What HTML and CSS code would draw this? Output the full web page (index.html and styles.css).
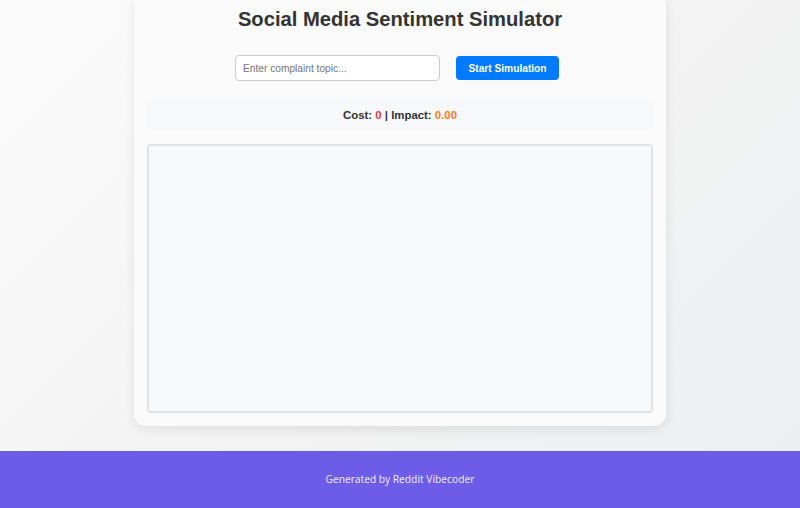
FILE: index.html
```html
<!DOCTYPE html>
<html lang="en">
<head>
<meta charset="utf-8">
<title>Social Media Sentiment Simulator</title>
<link rel="stylesheet" href="styles.css">
</head>
<body>
<main class="page">
  <section class="card">
    <h1 class="title">Social Media Sentiment Simulator</h1>
    <div class="controls">
      <input class="topic" type="text" placeholder="Enter complaint topic...">
      <button class="start">Start Simulation</button>
    </div>
    <div class="stats">Cost: <span class="cost">0</span> | Impact: <span class="impact">0.00</span></div>
    <div class="canvas"></div>
  </section>
</main>
<footer class="footer">Generated by Reddit Vibecoder</footer>
</body>
</html>
```

FILE: styles.css
```css
html, body {
  margin: 0;
  padding: 0;
}
body {
  font-family: "Liberation Sans", Arial, sans-serif;
  color: #333;
  background: linear-gradient(135deg, #fcfbfb 0%, #f3f3f3 50%, #eceef0 100%);
  height: 508px;
  overflow: hidden;
  display: flex;
  flex-direction: column;
}
.page {
  flex: 1;
  display: flex;
  justify-content: center;
  align-items: flex-start;
}
.card {
  width: 508px;
  margin-top: -8px;
  padding: 13px 12px 13px;
  background: #fafafa;
  border-radius: 12px;
  box-shadow: 0 4px 12px rgba(0, 0, 0, 0.08);
}
.title {
  margin: 0;
  font-size: 20.2px;
  line-height: 28px;
  font-weight: bold;
  text-align: center;
  color: #333;
}
.controls {
  margin-top: 22px;
  display: flex;
  justify-content: center;
  align-items: center;
  gap: 16px;
  padding-right: 6px;
}
.topic {
  box-sizing: border-box;
  width: 205px;
  height: 26px;
  padding: 0 7px;
  border: 1px solid #ccc;
  border-radius: 4px;
  background: #fff;
  font-family: "Liberation Sans", Arial, sans-serif;
  font-size: 10.2px;
  color: #333;
  outline: none;
}
.topic::placeholder {
  color: #757575;
}
.start {
  box-sizing: border-box;
  width: 103px;
  height: 24px;
  border: none;
  border-radius: 4px;
  background: #007bff;
  color: #fff;
  font-family: "Liberation Sans", Arial, sans-serif;
  font-size: 10.2px;
  font-weight: bold;
  cursor: pointer;
}
.stats {
  margin-top: 19px;
  height: 30px;
  line-height: 30px;
  background: #f7f8fa;
  border-radius: 6px;
  text-align: center;
  font-size: 11.4px;
  font-weight: bold;
  color: #333;
}
.cost {
  color: #e63946;
}
.impact {
  color: #fd7e14;
}
.canvas {
  margin: 14px auto 0;
  width: 502px;
  height: 265px;
  border: 2px solid #e0e2e4;
  border-radius: 4px;
  background: #f8f9fa;
}
.footer {
  height: 57px;
  line-height: 57px;
  background: #6c5ce7;
  color: rgba(255, 255, 255, 0.88);
  text-align: center;
  font-family: "Noto Sans", sans-serif;
  font-size: 10.2px;
}
```
